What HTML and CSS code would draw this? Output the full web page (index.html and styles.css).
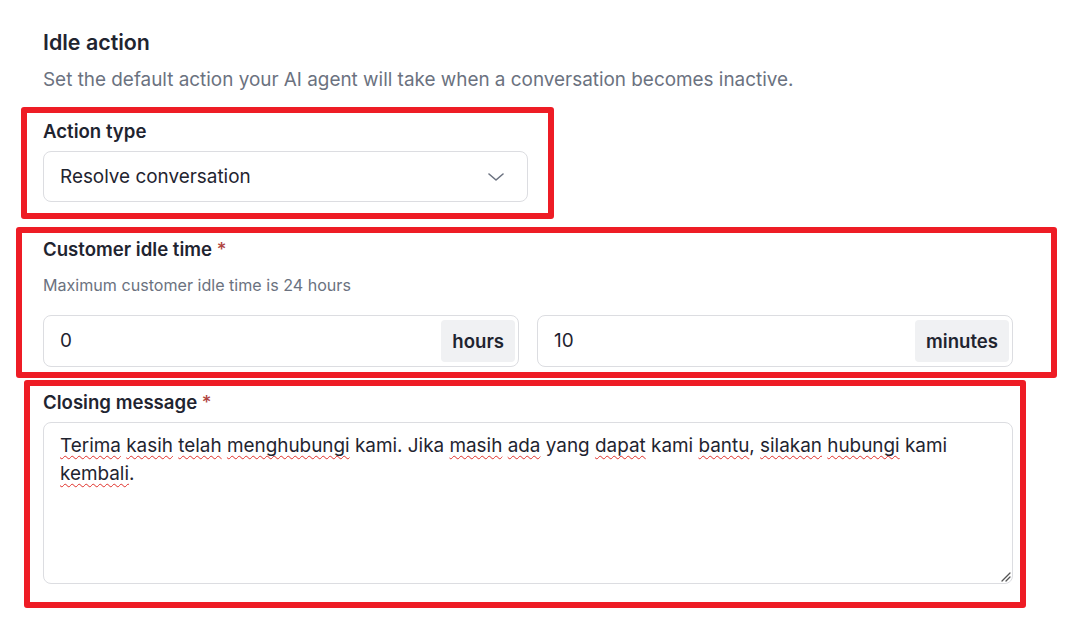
FILE: index.html
```html
<!DOCTYPE html>
<html lang="en">
<head>
<meta charset="utf-8">
<title>Idle action</title>
<link rel="stylesheet" href="styles.css">
</head>
<body>
<main class="page">
  <h1 class="title">Idle action</h1>
  <p class="desc">Set the default action your AI agent will take when a conversation becomes inactive.</p>

  <section class="field field-action">
    <label class="label">Action type</label>
    <div class="select">
      <span class="select-value">Resolve conversation</span>
      <svg class="chevron" width="16" height="8" viewBox="0 0 16 8"><path d="M1 1 L8 7 L15 1" fill="none" stroke="#6b7280" stroke-width="1.6" stroke-linecap="round" stroke-linejoin="round"/></svg>
    </div>
  </section>

  <section class="field field-idle">
    <label class="label">Customer idle time <span class="req">*</span></label>
    <p class="help">Maximum customer idle time is 24 hours</p>
    <div class="pair">
      <div class="input">
        <span class="input-value">0</span>
        <span class="suffix">hours</span>
      </div>
      <div class="input">
        <span class="input-value">10</span>
        <span class="suffix">minutes</span>
      </div>
    </div>
  </section>

  <section class="field field-closing">
    <label class="label">Closing message <span class="req">*</span></label>
    <div class="textarea"><span class="sp">Terima</span> <span class="sp">kasih</span> <span class="sp">telah</span> <span class="sp">menghubungi</span> kami. Jika <span class="sp">masih</span> <span class="sp">ada</span> yang <span class="sp">dapat</span> kami <span class="sp">bantu</span>, <span class="sp">silakan</span> <span class="sp">hubungi</span> kami <span class="sp">kembali</span>.<svg class="grip" width="12" height="12" viewBox="0 0 12 12"><path d="M11 3 L3 11 M11 7 L7 11" stroke="#555" stroke-width="1.3" stroke-linecap="round"/></svg></div>
  </section>
</main>

<div class="mark mark-1"></div>
<div class="mark mark-2"></div>
<div class="mark mark-3"></div>
</body>
</html>
```

FILE: styles.css
```css
* { box-sizing: border-box; }

html, body {
  margin: 0;
  padding: 0;
  background: #ffffff;
}

body {
  font-family: Inter, "Noto Sans", "Liberation Sans", sans-serif;
  color: #1f2430;
  width: 1089px;
  height: 624px;
  overflow: hidden;
  position: relative;
}

.page {
  padding: 28px 0 0 43px;
  width: 1013px;
}

.title {
  margin: 0;
  font-size: 21.4px;
  line-height: 28px;
  font-weight: 600;
  color: #1f2430;
}

.desc {
  margin: 12px 0 0;
  font-size: 18.9px;
  line-height: 24px;
  color: #6b7280;
}

.field { display: flex; flex-direction: column; }

.field-action { margin-top: 27px; }
.field-idle { margin-top: 35px; }
.field-closing { margin-top: 23px; }

.label {
  font-size: 18.6px;
  line-height: 24px;
  font-weight: 600;
  color: #1f2430;
}

.req { color: #b0443e; font-weight: 500; }

.select {
  margin-top: 8px;
  width: 485px;
  height: 51px;
  border: 1px solid #dcdde1;
  border-radius: 8px;
  display: flex;
  align-items: center;
  justify-content: space-between;
  padding: 0 23px 0 16px;
}

.select-value, .input-value {
  font-size: 18.9px;
  line-height: 24px;
  color: #1f2430;
}

.chevron { display: block; margin-top: 1px; }

.help {
  margin: 14px 0 0;
  font-size: 16.1px;
  line-height: 20px;
  color: #6b7280;
}

.pair {
  margin-top: 20px;
  display: grid;
  grid-template-columns: 1fr 1fr;
  gap: 18px;
}

.input {
  height: 52px;
  border: 1px solid #dcdde1;
  border-radius: 8px;
  display: flex;
  align-items: center;
  justify-content: space-between;
  padding: 4px 3px 4px 16px;
}

.suffix {
  align-self: stretch;
  display: flex;
  align-items: center;
  background: #f0f1f3;
  border-radius: 4px;
  padding: 0 11px;
  font-size: 18.6px;
  font-weight: 600;
  color: #1f2430;
}

.textarea {
  position: relative;
  margin-top: 8px;
  height: 162px;
  border: 1px solid #dcdde1;
  border-radius: 8px;
  padding: 9px 16px;
  font-size: 18.9px;
  line-height: 28px;
  color: #1f2430;
}

.sp {
  text-decoration: underline wavy #e0302a;
  text-decoration-thickness: 1.4px;
  text-underline-offset: 3px;
  text-decoration-skip-ink: none;
}

.grip {
  position: absolute;
  right: 1px;
  bottom: 1px;
}

.mark {
  position: absolute;
  border: 6px solid #ee1c25;
  border-radius: 3px;
  pointer-events: none;
}

.mark-1 { left: 21px; top: 107px; width: 533px; height: 112px; }
.mark-2 { left: 16px; top: 227px; width: 1041px; height: 151px; }
.mark-3 { left: 24px; top: 380px; width: 1002px; height: 228px; }
```
